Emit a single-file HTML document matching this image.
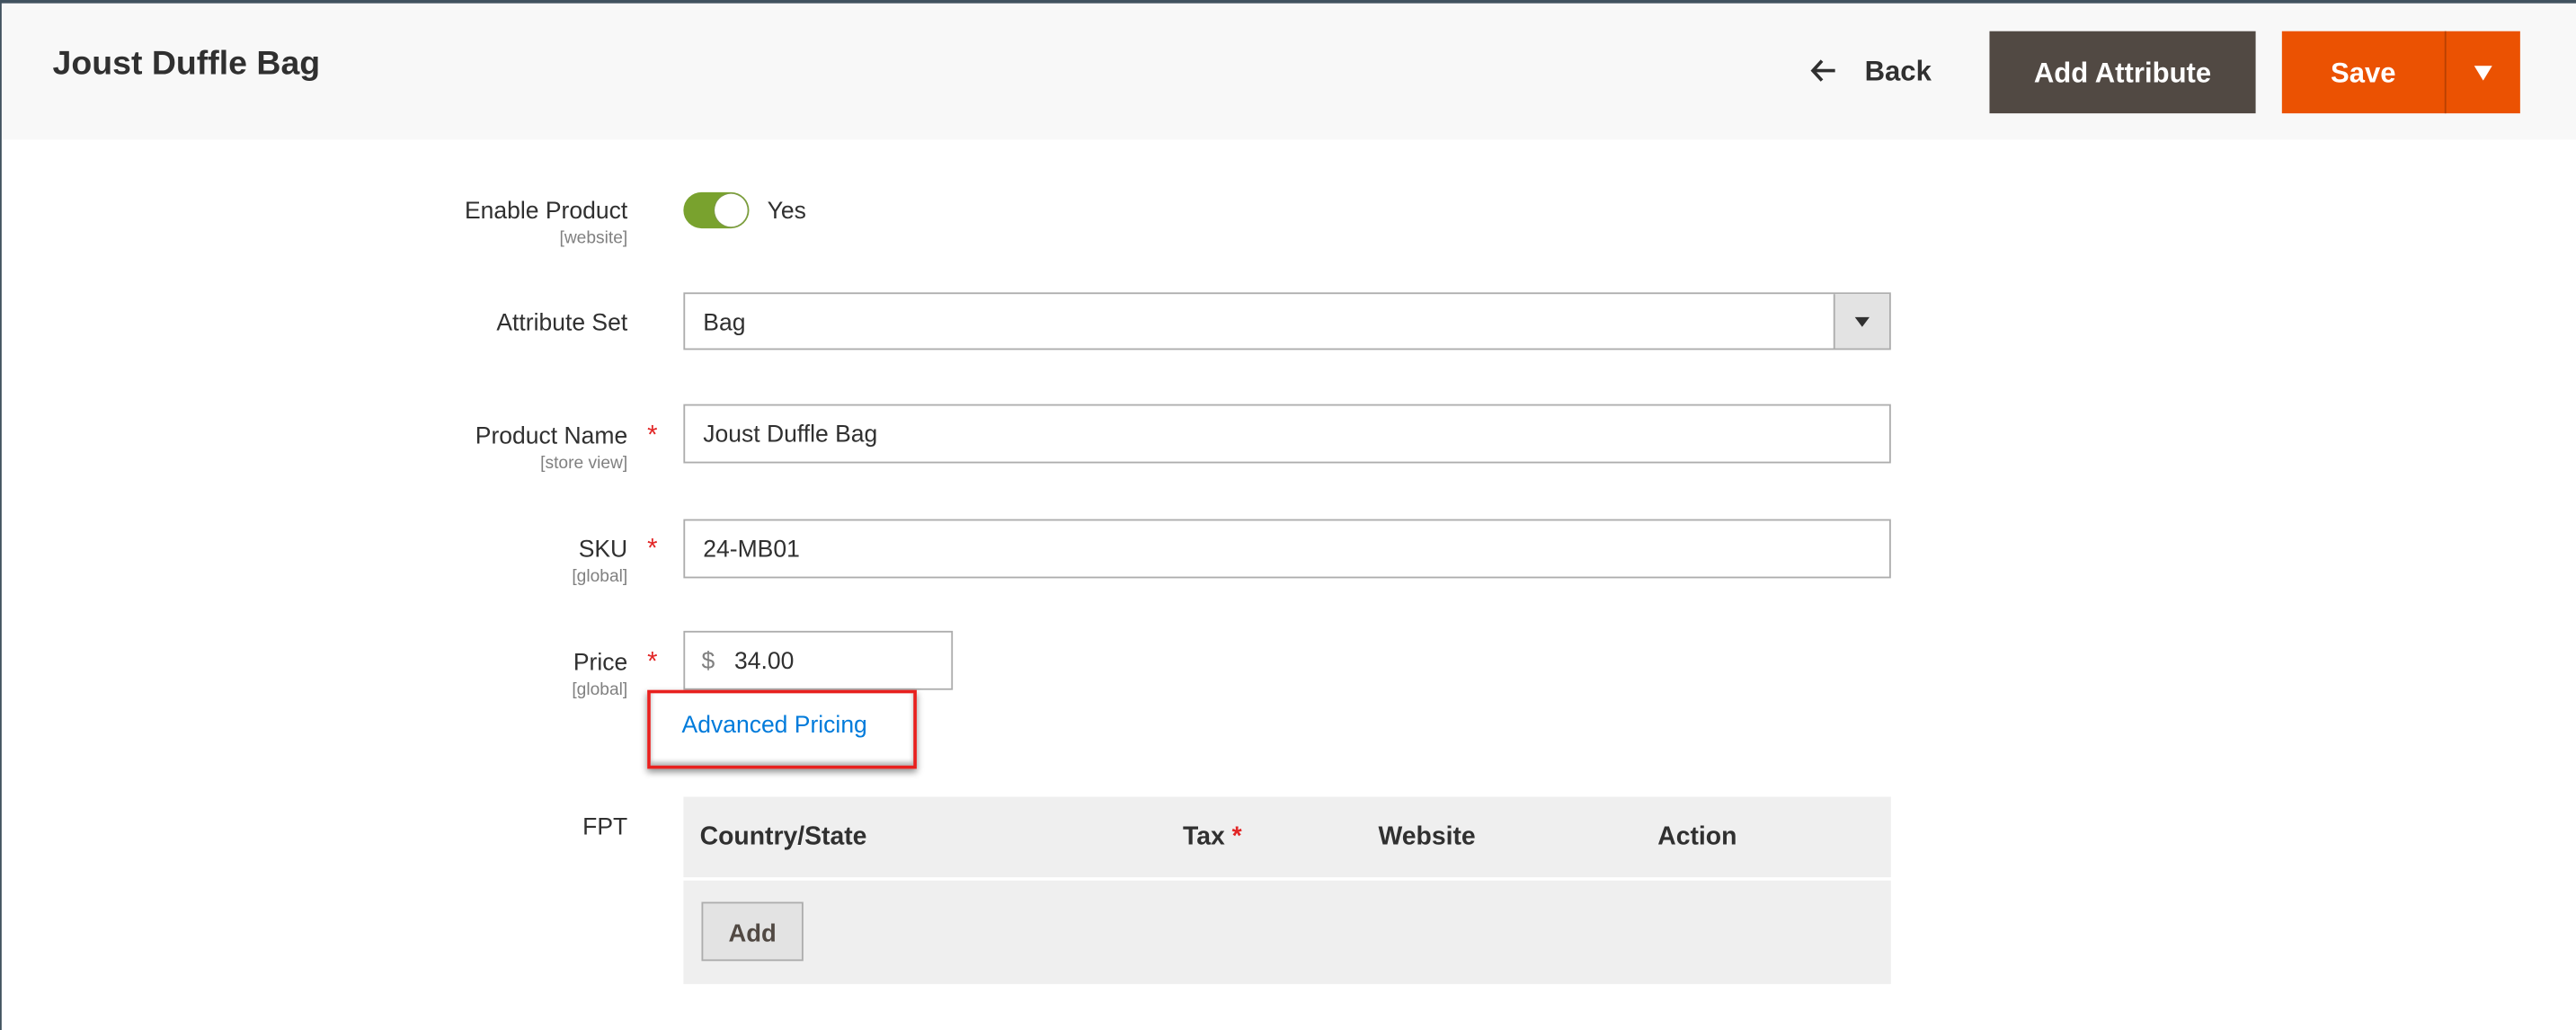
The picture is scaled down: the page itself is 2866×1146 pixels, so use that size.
<!DOCTYPE html>
<html><head><meta charset="utf-8"><style>
html,body{margin:0;padding:0;background:#fff;overflow:hidden;width:2866px;height:1146px}
#w{position:absolute;left:0;top:0;width:1568px;height:627px;transform:scale(1.82781);transform-origin:0 0;font-family:"Liberation Sans",Arial,sans-serif;color:#303030}
.a{position:absolute}
.hdr{left:0;top:0;width:1568px;height:85px;background:#f8f8f8;border-top:2px solid #41525f;box-sizing:border-box}
.lbl{right:1186px;font-size:14.5px;text-align:right;white-space:nowrap;color:#303030}
.sc{right:1186px;font-size:10.5px;color:#808080;white-space:nowrap}
.req{color:#e22626;font-size:16px}
.inp{border:1px solid #adadad;background:#fff;box-sizing:border-box;font-size:14.5px;color:#303030}
.th{font-weight:bold;font-size:15.5px;color:#303030;top:501px}
</style></head><body><div id="w">
<div class="a hdr"></div>
<div class="a" style="left:0;top:0;width:1px;height:627px;background:#41525f"></div>
<div class="a" style="left:32px;top:27px;font-size:20.5px;font-weight:bold;color:#303030">Joust Duffle Bag</div>
<svg class="a" style="left:1102px;top:36px" width="16" height="14" viewBox="0 0 16 14"><path d="M7 1L1.5 7L7 13M1.5 7H15" stroke="#303030" stroke-width="2" fill="none"/></svg>
<div class="a" style="left:1135px;top:34px;font-size:17px;font-weight:bold;color:#303030">Back</div>
<div class="a" style="left:1211px;top:19px;width:162px;height:50px;background:#514943;color:#fff;font-weight:bold;font-size:17px;line-height:52px;text-align:center">Add Attribute</div>
<div class="a" style="left:1389px;top:19px;width:145px;height:50px;background:#eb5202"></div>
<div class="a" style="left:1488px;top:19px;width:1px;height:50px;background:#b84002"></div>
<div class="a" style="left:1389px;top:19px;width:99px;height:50px;color:#fff;font-weight:bold;font-size:17px;line-height:52px;text-align:center">Save</div>
<svg class="a" style="left:1506px;top:40px" width="11" height="9"><path d="M0 0H11L5.5 9Z" fill="#fff"/></svg>

<div class="a lbl" style="top:121px">Enable Product</div>
<div class="a sc" style="top:139px">[website]</div>
<div class="a" style="left:416px;top:117px;width:40px;height:22px;border-radius:11px;background:#79a22e"></div>
<div class="a" style="left:435px;top:118px;width:20px;height:20px;border-radius:10px;background:#fff;box-shadow:0 0 1px #888"></div>
<div class="a" style="left:467px;top:121px;font-size:14.5px">Yes</div>

<div class="a lbl" style="top:189px">Attribute Set</div>
<div class="a inp" style="left:416px;top:178px;width:735px;height:35px"></div>
<div class="a" style="left:1116px;top:179px;width:33px;height:33px;background:#e3e3e3;border-left:1px solid #adadad"></div>
<svg class="a" style="left:1129px;top:193px" width="9" height="6"><path d="M0 0H9L4.5 6Z" fill="#303030"/></svg>
<div class="a" style="left:428px;top:189px;font-size:14.5px">Bag</div>

<div class="a lbl" style="top:258px">Product Name</div>
<div class="a req" style="left:394px;top:257px">*</div>
<div class="a sc" style="top:276px">[store view]</div>
<div class="a inp" style="left:416px;top:246px;width:735px;height:36px;padding:10px 11px">Joust Duffle Bag</div>

<div class="a lbl" style="top:327px">SKU</div>
<div class="a req" style="left:394px;top:326px">*</div>
<div class="a sc" style="top:345px">[global]</div>
<div class="a inp" style="left:416px;top:316px;width:735px;height:36px;padding:10px 11px">24-MB01</div>

<div class="a lbl" style="top:396px">Price</div>
<div class="a req" style="left:394px;top:395px">*</div>
<div class="a sc" style="top:414px">[global]</div>
<div class="a inp" style="left:416px;top:384px;width:164px;height:36px"></div>
<div class="a" style="left:427px;top:395px;font-size:14.5px;color:#808080">$</div>
<div class="a" style="left:447px;top:395px;font-size:14.5px">34.00</div>

<div class="a" style="left:394px;top:420px;width:164px;height:48px;border:2px solid #e8201e;box-sizing:border-box;box-shadow:0 2px 4px rgba(0,0,0,.45),0 -2px 3px rgba(0,0,0,.3) inset"></div>
<div class="a" style="left:415px;top:434px;font-size:14.5px;color:#007bdb">Advanced Pricing</div>

<div class="a lbl" style="top:496px">FPT</div>
<div class="a" style="left:416px;top:485px;width:735px;height:49px;background:#efefef"></div>
<div class="a" style="left:416px;top:536px;width:735px;height:63px;background:#efefef"></div>
<div class="a th" style="left:426px">Country/State</div>
<div class="a th" style="left:720px">Tax <span style="color:#e22626">*</span></div>
<div class="a th" style="left:839px">Website</div>
<div class="a th" style="left:1009px">Action</div>
<div class="a" style="left:427px;top:549px;width:62px;height:36px;background:#e3e3e3;border:1px solid #adadad;box-sizing:border-box;font-weight:bold;font-size:15px;color:#514943;text-align:center;line-height:37px">Add</div>
</div></body></html>
